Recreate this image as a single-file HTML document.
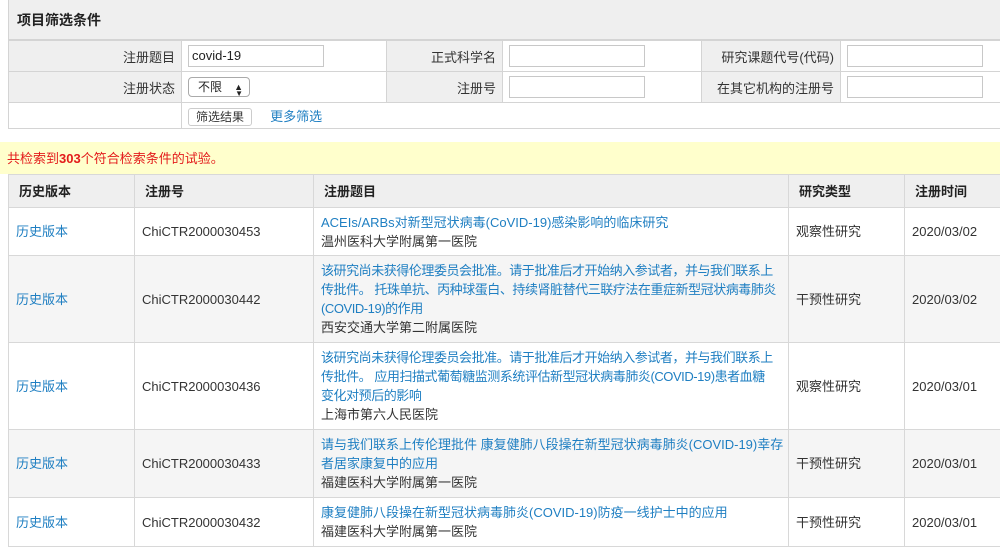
<!DOCTYPE html>
<html><head><meta charset="utf-8"><style>
body{margin:0;width:1000px;height:547px;overflow:hidden;background:#fff;font-family:"Liberation Sans","Noto Sans CJK SC",sans-serif;font-size:13px;color:#333;position:relative}
a{color:#1f7fc2;text-decoration:none}
.panel{position:absolute;left:8px;top:0;width:1000px;border-left:1px solid #d4d4d4}
.ph{height:40px;background:#efefef;font-weight:bold;font-size:14px;line-height:40px;padding-left:8px;color:#222;border-bottom:1px solid #d4d4d4;box-sizing:border-box}
table{border-collapse:collapse;table-layout:fixed}
.f td{border:1px solid #d4d4d4;height:31px;padding:0;box-sizing:border-box}
.f td.l{background:#efefef;text-align:right;padding-right:6px}
.f td.v{padding-left:6px}
.inp{width:136px;height:22px;border:1px solid #c8c8c8;box-sizing:border-box;font-size:13px;line-height:20px;padding-left:3px;color:#222}
.sel{display:inline-block;width:62px;height:20px;border:1px solid #aaa;border-radius:4px;box-sizing:border-box;line-height:18px;padding-left:9px;position:relative;font-size:12px;color:#222}
.btn{display:inline-block;border:1px solid #ccc;border-radius:3px;padding:0 7px;font-size:12px;line-height:16px;color:#333}
.msg{position:absolute;left:0;top:142px;width:1000px;height:32px;background:#ffffcc;color:#e31b1b;line-height:34px;padding-left:7px;box-sizing:border-box}
.r{position:absolute;left:8px;top:174px}
.r td{border:1px solid #d8d8d8;padding:0 0 0 7px;vertical-align:middle;line-height:19px}
.r td.t{padding-right:0;white-space:nowrap;overflow:hidden}
.r td.t a.n{letter-spacing:-0.45px}
.r tr.h td{background:#efefef;font-weight:bold;height:32px;color:#222;padding-left:10px}
.r tr.g td{background:#f5f5f5}
</style></head><body>
<div class="panel">
<div class="ph">项目筛选条件</div>
<table class="f" style="width:1000px;margin-left:-1px">
<colgroup><col style="width:173px"><col style="width:205px"><col style="width:116px"><col style="width:199px"><col style="width:139px"><col style="width:168px"></colgroup>
<tr><td class="l">注册题目</td><td class="v"><div class="inp">covid-19</div></td><td class="l">正式科学名</td><td class="v"><div class="inp"></div></td><td class="l">研究课题代号(代码)</td><td class="v"><div class="inp"></div></td></tr>
<tr><td class="l">注册状态</td><td class="v"><span class="sel">不限<span style="position:absolute;right:6px;top:0;font-size:9px">&#9650;<br></span><span style="position:absolute;right:6px;top:7px;font-size:8px">&#9660;</span></span></td><td class="l">注册号</td><td class="v"><div class="inp"></div></td><td class="l">在其它机构的注册号</td><td class="v"><div class="inp"></div></td></tr>
<tr><td style="height:26px"></td><td class="v" colspan="5" style="height:26px;border-left:1px solid #d4d4d4"><span class="btn">筛选结果</span>&nbsp;&nbsp;&nbsp;&nbsp;&nbsp;<a>更多筛选</a></td></tr>
</table>
</div>
<div class="msg">共检索到<b>303</b>个符合检索条件的试验。</div>
<table class="r" style="width:1010px">
<colgroup><col style="width:126px"><col style="width:179px"><col style="width:475px"><col style="width:116px"><col style="width:114px"></colgroup>
<tr class="h"><td>历史版本</td><td>注册号</td><td>注册题目</td><td>研究类型</td><td>注册时间</td></tr>
<tr style="height:48px"><td><a>历史版本</a></td><td>ChiCTR2000030453</td><td class="t"><a>ACEIs/ARBs对新型冠状病毒(CoVID-19)感染影响的临床研究</a><br>温州医科大学附属第一医院</td><td>观察性研究</td><td>2020/03/02</td></tr>
<tr class="g" style="height:87px"><td><a>历史版本</a></td><td>ChiCTR2000030442</td><td class="t"><a class="n">该研究尚未获得伦理委员会批准。请于批准后才开始纳入参试者，并与我们联系上<br>传批件。 托珠单抗、丙种球蛋白、持续肾脏替代三联疗法在重症新型冠状病毒肺炎<br>(COVID-19)的作用</a><br>西安交通大学第二附属医院</td><td>干预性研究</td><td>2020/03/02</td></tr>
<tr style="height:87px"><td><a>历史版本</a></td><td>ChiCTR2000030436</td><td class="t"><a class="n">该研究尚未获得伦理委员会批准。请于批准后才开始纳入参试者，并与我们联系上<br>传批件。 应用扫描式葡萄糖监测系统评估新型冠状病毒肺炎(COVID-19)患者血糖<br>变化对预后的影响</a><br>上海市第六人民医院</td><td>观察性研究</td><td>2020/03/01</td></tr>
<tr class="g" style="height:68px"><td><a>历史版本</a></td><td>ChiCTR2000030433</td><td class="t"><a>请与我们联系上传伦理批件 康复健肺八段操在新型冠状病毒肺炎(COVID-19)幸存<br>者居家康复中的应用</a><br>福建医科大学附属第一医院</td><td>干预性研究</td><td>2020/03/01</td></tr>
<tr style="height:49px"><td><a>历史版本</a></td><td>ChiCTR2000030432</td><td class="t"><a>康复健肺八段操在新型冠状病毒肺炎(COVID-19)防疫一线护士中的应用</a><br>福建医科大学附属第一医院</td><td>干预性研究</td><td>2020/03/01</td></tr>
</table>
</body></html>
